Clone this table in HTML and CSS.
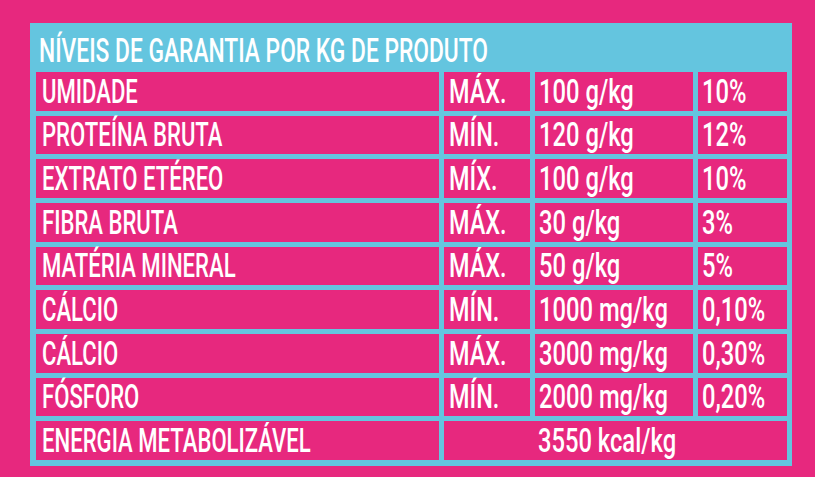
FILE: index.html
```html
<!DOCTYPE html>
<html lang="pt">
<head>
<meta charset="utf-8">
<title>Níveis de garantia</title>
<link rel="stylesheet" href="styles.css">
</head>
<body>
<div class="table">
  <div class="head"><span class="txt">NÍVEIS DE GARANTIA POR KG DE PRODUTO</span></div>
  <div class="grid">
    <div class="cell"><span class="txt">UMIDADE</span></div>
    <div class="cell c2"><span class="txt">MÁX.</span></div>
    <div class="cell c3"><span class="txt">100 g/kg</span></div>
    <div class="cell c4"><span class="txt">10%</span></div>

    <div class="cell"><span class="txt">PROTEÍNA BRUTA</span></div>
    <div class="cell c2"><span class="txt">MÍN.</span></div>
    <div class="cell c3"><span class="txt">120 g/kg</span></div>
    <div class="cell c4"><span class="txt">12%</span></div>

    <div class="cell"><span class="txt">EXTRATO ETÉREO</span></div>
    <div class="cell c2"><span class="txt">MÍX.</span></div>
    <div class="cell c3"><span class="txt">100 g/kg</span></div>
    <div class="cell c4"><span class="txt">10%</span></div>

    <div class="cell"><span class="txt">FIBRA BRUTA</span></div>
    <div class="cell c2"><span class="txt">MÁX.</span></div>
    <div class="cell c3"><span class="txt">30 g/kg</span></div>
    <div class="cell c4"><span class="txt">3%</span></div>

    <div class="cell"><span class="txt">MATÉRIA MINERAL</span></div>
    <div class="cell c2"><span class="txt">MÁX.</span></div>
    <div class="cell c3"><span class="txt">50 g/kg</span></div>
    <div class="cell c4"><span class="txt">5%</span></div>

    <div class="cell"><span class="txt">CÁLCIO</span></div>
    <div class="cell c2"><span class="txt">MÍN.</span></div>
    <div class="cell c3"><span class="txt">1000 mg/kg</span></div>
    <div class="cell c4"><span class="txt">0,10%</span></div>

    <div class="cell"><span class="txt">CÁLCIO</span></div>
    <div class="cell c2"><span class="txt">MÁX.</span></div>
    <div class="cell c3"><span class="txt">3000 mg/kg</span></div>
    <div class="cell c4"><span class="txt">0,30%</span></div>

    <div class="cell"><span class="txt">FÓSFORO</span></div>
    <div class="cell c2"><span class="txt">MÍN.</span></div>
    <div class="cell c3"><span class="txt">2000 mg/kg</span></div>
    <div class="cell c4"><span class="txt">0,20%</span></div>

    <div class="cell"><span class="txt">ENERGIA METABOLIZÁVEL</span></div>
    <div class="cell span3"><span class="txt">3550 kcal/kg</span></div>
  </div>
</div>
</body>
</html>
```

FILE: styles.css
```css
html, body {
  margin: 0;
  padding: 0;
  background: #e7287e;
}

body {
  width: 815px;
  height: 477px;
  overflow: hidden;
  padding-top: 23px;
  padding-left: 30px;
  box-sizing: border-box;
  font-family: Roboto, "Liberation Sans", sans-serif;
  color: #ffffff;
}

.table {
  width: 762px;
  height: 443px;
  background: #64c5df;
  display: flex;
  flex-direction: column;
}

.head {
  height: 49px;
  box-sizing: border-box;
  display: flex;
  align-items: flex-end;
  padding: 0 9px 5px 9px;
  font-size: 33px;
  font-weight: 500;
  line-height: 33px;
  white-space: nowrap;
}

.head .txt {
  transform: scaleX(0.69);
}

.grid {
  flex: 1;
  display: grid;
  grid-template-columns: 403px 86px 158px 89px;
  grid-auto-rows: 1fr;
  column-gap: 5px;
  row-gap: 5px;
  padding: 0 5px 6px 6px;
}

.cell {
  background: #e7287e;
  display: flex;
  align-items: center;
  padding-left: 6px;
  font-size: 33px;
  font-weight: 500;
  line-height: 33px;
  white-space: nowrap;
}

.txt {
  display: inline-block;
  transform: scaleX(0.67);
  transform-origin: left center;
}

.c2 { padding-left: 5px; }
.c2 .txt { transform: scaleX(0.71); }

.c3 { padding-left: 4px; }
.c3 .txt { transform: scaleX(0.72); }

.c4 { padding-left: 4px; }
.c4 .txt { transform: scaleX(0.72); }

.span3 {
  grid-column: span 3;
  justify-content: center;
  padding-left: 0;
  padding-right: 17px;
}

.span3 .txt {
  transform: scaleX(0.72);
  transform-origin: center center;
}
```
